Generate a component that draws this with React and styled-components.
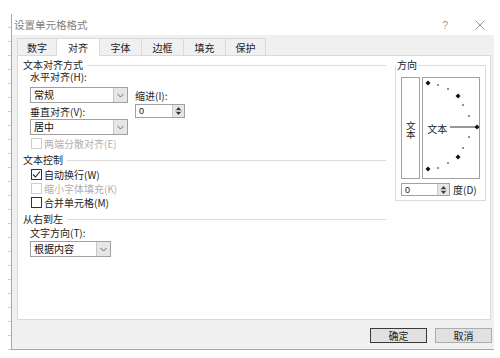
import React from 'react';
import styled, { createGlobalStyle } from 'styled-components';

const GlobalStyle = createGlobalStyle`
  html, body {
    margin: 0;
    padding: 0;
    background: #fff;
  }
  body {
    font-family: "Noto Sans CJK SC", "Liberation Sans", sans-serif;
    font-size: 10px;
    color: #333;
  }
`;

const Page = styled.div`
  display: flex;
  width: 500px;
  height: 358px;
  overflow: hidden;
`;

const Ruler = styled.div`
  width: 11px;
  margin-top: 14px;
  height: 336px;
  background: repeating-linear-gradient(to bottom, transparent 0 13px, #cfcfcf 13px 14px) right top / 3px 100% no-repeat;
`;

const Dialog = styled.div`
  margin-top: 14px;
  width: 482px;
  height: 335px;
  border-left: 1px solid #a8a8a8;
  border-bottom: 1px solid #a8a8a8;
  background: #f0f0f0;
  display: flex;
  flex-direction: column;
`;

const TitleBar = styled.div`
  height: 21px;
  background: #fff;
  display: flex;
  align-items: center;
  padding: 0 9px 0 2px;
  color: #808080;
  font-size: 10.5px;
`;

const Title = styled.div`
  flex: 1;
`;

const Help = styled.span`
  color: #9a9a9a;
  margin-right: 27px;
  font-family: "Liberation Sans", sans-serif;
`;

const TabRow = styled.div`
  display: flex;
  align-items: flex-end;
  margin: 3px 0 0 5px;
  height: 17px;
  position: relative;
  z-index: 1;
`;

const Tab = styled.div`
  width: ${p => p.$w}px;
  height: ${p => (p.$active ? 18 : 17)}px;
  box-sizing: border-box;
  margin-left: -1px;
  border: 1px solid #d9d9d9;
  border-bottom: ${p => (p.$active ? '1px solid #fff' : 'none')};
  margin-bottom: ${p => (p.$active ? -1 : 0)}px;
  background: ${p => (p.$active ? '#fff' : '#f0f0f0')};
  display: flex;
  align-items: center;
  justify-content: center;
  color: #222;
  &:first-child {
    margin-left: 0;
  }
`;

const Panel = styled.div`
  margin-left: 5px;
  width: 474px;
  height: 265px;
  box-sizing: border-box;
  border: 1px solid #d9d9d9;
  background: #fff;
  padding: 3px 0 0 5px;
  display: grid;
  grid-template-columns: 363px 91px;
  column-gap: 9px;
  align-items: start;
`;

const Column = styled.div`
  display: flex;
  flex-direction: column;
`;

const Header = styled.div`
  display: flex;
  align-items: center;
  gap: 4px;
  height: 12px;
  line-height: 12px;
  margin-top: ${p => p.$mt || 0}px;
  color: #222;
  &::after {
    content: '';
    flex: 1;
    height: 1px;
    background: #dcdcdc;
  }
`;

const Indent = styled.div`
  margin-left: 7px;
  margin-top: ${p => p.$mt || 0}px;
`;

const AlignGrid = styled.div`
  display: grid;
  grid-template-columns: 98px 50px;
  grid-template-rows: 16px 17px 15px 17px 12px;
  column-gap: 7px;
  margin-left: 7px;
`;

const Label = styled.div`
  height: 12px;
  line-height: 12px;
  white-space: nowrap;
  color: ${p => (p.$disabled ? '#aaa' : '#222')};
  align-self: ${p => p.$align || 'start'};
  grid-column: ${p => p.$col || 'auto'};
  grid-row: ${p => p.$row || 'auto'};
`;

const Combo = styled.div`
  width: ${p => p.$w}px;
  height: 16px;
  box-sizing: border-box;
  border: 1px solid #a0a0a0;
  background: #fff;
  display: flex;
  align-items: stretch;
  grid-column: 1;
  grid-row: ${p => p.$row || 'auto'};
  margin-top: ${p => p.$mt || 0}px;
`;

const ComboText = styled.div`
  flex: 1;
  padding-left: 3px;
  line-height: 14px;
  color: #111;
`;

const DropBtn = styled.div`
  width: 13px;
  border-left: 1px solid #c8c8c8;
  background: #e6e6e6;
  display: flex;
  align-items: center;
  justify-content: center;
`;

const Spinner = styled.div`
  width: ${p => p.$w}px;
  height: ${p => p.$h}px;
  box-sizing: border-box;
  border: 1px solid #a0a0a0;
  background: #fff;
  display: flex;
  grid-column: ${p => p.$col || 'auto'};
  grid-row: ${p => p.$row || 'auto'};
`;

const SpinText = styled.div`
  flex: 1;
  padding-left: 3px;
  font-family: "Liberation Sans", sans-serif;
  font-size: 9px;
  display: flex;
  align-items: center;
  color: #111;
`;

const SpinBtn = styled.div`
  width: 11px;
  background: #e6e6e6;
  border-left: 1px solid #c8c8c8;
  display: flex;
  align-items: center;
  justify-content: center;
`;

const CheckRow = styled.div`
  display: flex;
  align-items: center;
  gap: 2px;
  height: 14px;
  margin-left: 1px;
  grid-column: 1 / span 2;
  grid-row: ${p => p.$row || 'auto'};
  color: ${p => (p.$disabled ? '#b0b0b0' : '#222')};
`;

const Box = styled.div`
  width: 11px;
  height: 11px;
  box-sizing: border-box;
  border: 1px solid ${p => (p.$disabled ? '#cdcdcd' : '#333')};
  background: #fff;
  display: flex;
  align-items: center;
  justify-content: center;
`;

const Fieldset = styled.fieldset`
  margin: 0;
  padding: 6px 5px 3px 5px;
  border: 1px solid #dcdcdc;
  width: 91px;
  box-sizing: border-box;
  min-width: 0;
`;

const Legend = styled.legend`
  padding: 0 1px;
  margin-left: -5px;
  line-height: 12px;
  color: #222;
`;

const OrientRow = styled.div`
  display: flex;
  gap: 2px;
`;

const VertBox = styled.div`
  width: 20px;
  height: 102px;
  box-sizing: border-box;
  border: 1px solid #a0a0a0;
  display: flex;
  align-items: center;
  justify-content: center;
  padding-top: 4px;
  color: #222;
`;

const VertText = styled.span`
  writing-mode: vertical-rl;
  font-size: 9.5px;
  letter-spacing: -0.5px;
`;

const SemiBox = styled.div`
  position: relative;
  width: 60px;
  height: 102px;
  box-sizing: border-box;
  border: 1px solid #a0a0a0;
  display: flex;
  align-items: center;
  padding-left: 4px;
  color: #222;
`;

const Dial = styled.svg`
  position: absolute;
  left: 0;
  top: 0;
`;

const DegreeRow = styled.div`
  display: flex;
  align-items: center;
  gap: 3px;
  margin-top: 3px;
  color: #222;
`;

const Footer = styled.div`
  display: flex;
  justify-content: flex-end;
  gap: 8px;
  padding-right: 2px;
  margin-top: 8px;
`;

const Button = styled.div`
  width: 57px;
  height: 15px;
  box-sizing: border-box;
  border: 1px solid ${p => (p.$primary ? '#3a3a3a' : '#adadad')};
  background: #e1e1e1;
  display: flex;
  align-items: center;
  justify-content: center;
  color: #222;
`;

const Chevron = () => (
  <svg width="7" height="5" viewBox="0 0 7 5">
    <path d="M0.5 1 L3.5 4 L6.5 1" fill="none" stroke="#666" strokeWidth="1" />
  </svg>
);

const Arrows = () => (
  <svg width="7" height="10" viewBox="0 0 7 10">
    <path d="M3.5 1 L6 4 L1 4 Z" fill="#333" />
    <line x1="0" y1="5" x2="7" y2="5" stroke="#999" strokeWidth="0.8" />
    <path d="M1 6 L6 6 L3.5 9 Z" fill="#333" />
  </svg>
);

const Tick = () => (
  <svg width="9" height="9" viewBox="0 0 9 9">
    <path d="M1 4.5 L3.5 7 L8 1.5" fill="none" stroke="#222" strokeWidth="1.1" />
  </svg>
);

const CheckBox = ({ checked, disabled, label, row }) => (
  <CheckRow $disabled={disabled} $row={row}>
    <Box $disabled={disabled}>{checked && <Tick />}</Box>
    {label}
  </CheckRow>
);

const bigDots = [[5, 5], [35, 18], [54, 49], [35, 79], [5, 91]];
const smallDots = [[15, 7], [25, 11], [40, 27], [46, 38], [46, 59], [40, 70], [25, 85], [15, 90]];

const tabs = [
  ['数字', 40],
  ['对齐', 44],
  ['字体', 43],
  ['边框', 43],
  ['填充', 43],
  ['保护', 41],
];

export default function App() {
  return (
    <Page>
      <GlobalStyle />
      <Ruler />
      <Dialog>
        <TitleBar>
          <Title>设置单元格格式</Title>
          <Help>?</Help>
          <svg width="10" height="10" viewBox="0 0 10 10">
            <path d="M0.5 0.5 L9.5 9.5 M9.5 0.5 L0.5 9.5" stroke="#8a8a8a" strokeWidth="0.9" />
          </svg>
        </TitleBar>

        <TabRow>
          {tabs.map(([name, w]) => (
            <Tab key={name} $w={w} $active={name === '对齐'}>{name}</Tab>
          ))}
        </TabRow>

        <Panel>
          <Column>
            <Header>文本对齐方式</Header>
            <AlignGrid>
              <Label $row={1}>水平对齐(H):</Label>
              <Combo $w={98} $row={2}>
                <ComboText>常规</ComboText>
                <DropBtn><Chevron /></DropBtn>
              </Combo>
              <Label $col={2} $row={2} $align="center">缩进(I):</Label>
              <Label $col={1} $row={3} $align="center">垂直对齐(V):</Label>
              <Spinner $w={50} $h={14} $col={2} $row={3}>
                <SpinText>0</SpinText>
                <SpinBtn><Arrows /></SpinBtn>
              </Spinner>
              <Combo $w={98} $row={4}>
                <ComboText>居中</ComboText>
                <DropBtn><Chevron /></DropBtn>
              </Combo>
              <CheckBox disabled row={5} label="两端分散对齐(E)" />
            </AlignGrid>

            <Header $mt={6}>文本控制</Header>
            <Indent $mt={1}>
              <CheckBox checked label="自动换行(W)" />
              <CheckBox disabled label="缩小字体填充(K)" />
              <CheckBox label="合并单元格(M)" />
            </Indent>

            <Header $mt={4}>从右到左</Header>
            <Indent $mt={2}>
              <Label>文字方向(T):</Label>
              <Combo $w={81} $mt={2}>
                <ComboText>根据内容</ComboText>
                <DropBtn><Chevron /></DropBtn>
              </Combo>
            </Indent>
          </Column>

          <Fieldset>
            <Legend>方向</Legend>
            <OrientRow>
              <VertBox>
                <VertText>文本</VertText>
              </VertBox>
              <SemiBox>
                <Dial width="58" height="100" viewBox="0 0 58 100">
                  <line x1="27" y1="49" x2="53" y2="49" stroke="#333" strokeWidth="1" />
                  {bigDots.map(([x, y]) => (
                    <polygon key={`${x}-${y}`} points={`${x},${y - 2.5} ${x + 2.5},${y} ${x},${y + 2.5} ${x - 2.5},${y}`} fill="#111" />
                  ))}
                  {smallDots.map(([x, y]) => (
                    <rect key={`${x}-${y}`} x={x - 0.7} y={y - 0.7} width="1.4" height="1.4" fill="#222" />
                  ))}
                </Dial>
                <span>文本</span>
              </SemiBox>
            </OrientRow>
            <DegreeRow>
              <Spinner $w={49} $h={13}>
                <SpinText>0</SpinText>
                <SpinBtn><Arrows /></SpinBtn>
              </Spinner>
              度(D)
            </DegreeRow>
          </Fieldset>
        </Panel>

        <Footer>
          <Button $primary>确定</Button>
          <Button>取消</Button>
        </Footer>
      </Dialog>
    </Page>
  );
}
